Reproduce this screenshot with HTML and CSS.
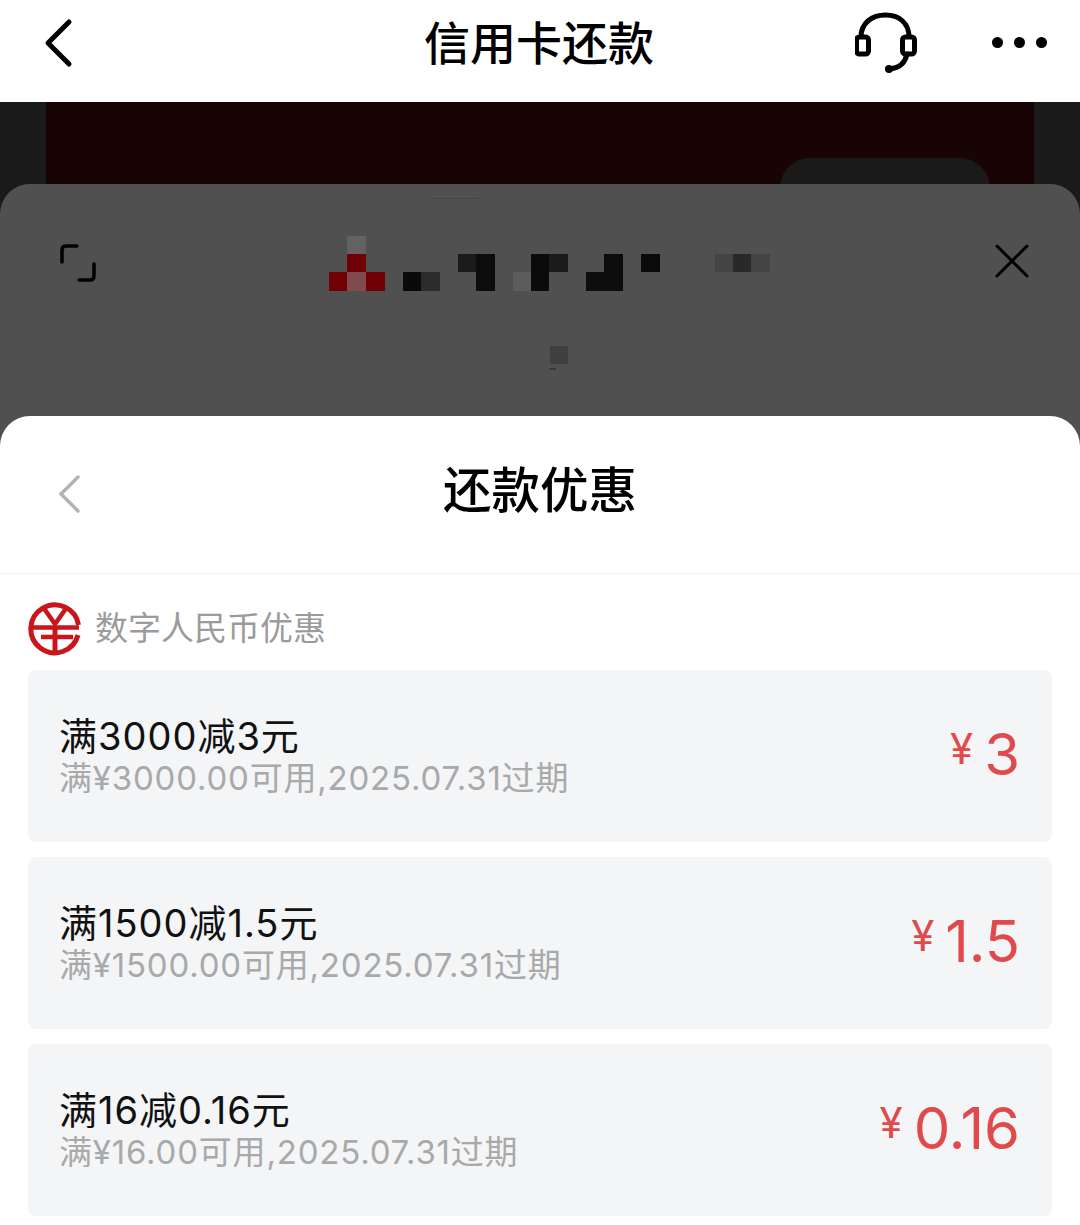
FILE: index.html
```html
<html>
    <head>
        <title>信用卡还款</title>
        <link rel="stylesheet" href="styles.css">
    </head>
    <body>
        <div class="page">
            <div class="nav">
                <svg class="nav-back" width="32" height="50" viewBox="0 0 32 50"><path d="M27 4 L6 25 L27 46" fill="none" stroke="#000" stroke-width="5" stroke-linecap="round" stroke-linejoin="round"/></svg>
                <div class="nav-title">信用卡还款</div>
                <svg class="nav-service" width="64" height="64" viewBox="0 0 64 64">
                    <path d="M6 27 C6 13 17 5 30.500 5 C44 5 54 13 54 27" fill="none" stroke="#000" stroke-width="5"/>
                    <rect x="1.500" y="27" width="12" height="17" rx="3" fill="#fff" stroke="#000" stroke-width="5"/>
                    <rect x="47.500" y="27" width="12" height="17" rx="3" fill="#fff" stroke="#000" stroke-width="5"/>
                    <path d="M52 44 C50 54 44 58 35 59" fill="none" stroke="#000" stroke-width="5" stroke-linecap="round"/>
                    <circle cx="34" cy="59" r="4"/>
                </svg>
                <div class="nav-more"><span></span><span></span><span></span></div>
            </div>

            <div class="backdrop">
                <div class="backdrop-panel"><div class="backdrop-pill"></div></div>
            </div>

            <div class="gray-sheet">
                <div class="handle"></div>
                <div class="gray-head">
                    <svg width="38" height="38" viewBox="0 0 38 38">
                        <path d="M17 2 H6 Q2 2 2 6 V18" fill="none" stroke="#000" stroke-width="3.500" stroke-linecap="round"/>
                        <path d="M34 20 V32 Q34 36 30 36 H19" fill="none" stroke="#000" stroke-width="3.500" stroke-linecap="round"/>
                    </svg>
                    <svg class="mosaic" width="441" height="137" viewBox="0 0 441 137">
                        <rect x="18" y="0" width="19" height="18" fill="#626262"/>
                        <rect x="18" y="18" width="19" height="18" fill="#700006"/>
                        <rect x="0" y="36" width="19" height="19" fill="#700006"/>
                        <rect x="18" y="36" width="19" height="19" fill="#7e4c4e"/>
                        <rect x="37" y="36" width="19" height="19" fill="#700006"/>
                        <rect x="74" y="36" width="18" height="19" fill="#0a0a0a"/>
                        <rect x="92" y="36" width="19" height="19" fill="#2b2b2b"/>
                        <rect x="129" y="18" width="18" height="18" fill="#1b1b1b"/>
                        <rect x="147" y="18" width="19" height="37" fill="#0c0c0c"/>
                        <rect x="184" y="36" width="18" height="19" fill="#5c5c5c"/>
                        <rect x="202" y="18" width="18" height="37" fill="#0b0b0b"/>
                        <rect x="220" y="18" width="19" height="18" fill="#1b1b1b"/>
                        <rect x="257" y="36" width="18" height="19" fill="#0d0d0d"/>
                        <rect x="275" y="18" width="19" height="37" fill="#0d0d0d"/>
                        <rect x="312" y="18" width="19" height="18" fill="#0b0b0b"/>
                        <rect x="386" y="18" width="18" height="18" fill="#444"/>
                        <rect x="404" y="18" width="18" height="18" fill="#292929"/>
                        <rect x="422" y="18" width="19" height="18" fill="#444"/>
                        <rect x="221" y="110" width="18" height="18" fill="#3f3f3f"/>
                        <rect x="220" y="132" width="7" height="2" fill="#3a3a3a"/>
                    </svg>
                    <svg width="34" height="34" viewBox="0 0 34 34"><path d="M2 2 L32 32 M32 2 L2 32" fill="none" stroke="#000" stroke-width="3" stroke-linecap="round"/></svg>
                </div>

                <div class="sheet">
                    <div class="sheet-head">
                        <svg class="sheet-back" width="24" height="40" viewBox="0 0 24 40"><path d="M21 3 L4 20 L21 37" fill="none" stroke="#b3b3b3" stroke-width="3.500" stroke-linecap="round" stroke-linejoin="round"/></svg>
                        <div class="sheet-title">还款优惠</div>
                    </div>
                    <div class="section">
                        <div class="section-head">
                            <svg class="rmb-logo" width="54" height="54" viewBox="0 0 54 54">
                                <path d="M50 33 A24 24 0 1 1 50.500 23" fill="none" stroke="#c9161c" stroke-width="5"/>
                                <path d="M15 5 L27 22 L39 5" fill="none" stroke="#c9161c" stroke-width="4.500"/>
                                <path d="M27 24 V51" stroke="#c9161c" stroke-width="5"/>
                                <path d="M5 25.500 H51 M13 35 H45" stroke="#c9161c" stroke-width="4.500"/>
                            </svg>
                            <span>数字人民币优惠</span>
                        </div>

                        <div class="card">
                            <div>
                                <div class="card-title">满3000减3元</div>
                                <div class="card-sub">满¥3000.00可用,2025.07.31过期</div>
                            </div>
                            <div class="card-price"><span class="yen">¥</span>3</div>
                        </div>
                        <div class="card">
                            <div>
                                <div class="card-title">满1500减1.5元</div>
                                <div class="card-sub">满¥1500.00可用,2025.07.31过期</div>
                            </div>
                            <div class="card-price"><span class="yen">¥</span>1.5</div>
                        </div>
                        <div class="card">
                            <div>
                                <div class="card-title">满16减0.16元</div>
                                <div class="card-sub">满¥16.00可用,2025.07.31过期</div>
                            </div>
                            <div class="card-price"><span class="yen">¥</span>0.16</div>
                        </div>
                    </div>
                </div>
            </div>
        </div>
    </body>
</html>
```

FILE: styles.css
```css
html, body {
    margin: 0;
    background: #fff;
}

.page {
    width: 1080px;
    height: 1225px;
    overflow: hidden;
    font-family: "Inter", "Noto Sans CJK SC", sans-serif;
}

.nav {
    height: 102px;
    display: flex;
    align-items: center;
    background: #fff;
    padding: 0 33px 0 42px;
    box-sizing: border-box;
}
.nav-back {
    margin-top: -16px;
}
.nav-title {
    flex: 1;
    text-align: center;
    font-size: 46px;
    font-weight: 500;
    color: #000;
    margin-top: -22px;
    padding-left: 149px;
    box-sizing: border-box;
}
.nav-service {
    margin-top: -18px;
    margin-right: 73px;
}
.nav-more {
    display: flex;
    gap: 11px;
    margin-top: -18px;
}
.nav-more span {
    width: 11px;
    height: 11px;
    border-radius: 50%;
    background: #000;
}

.backdrop {
    height: 112px;
    background: #1a1a1a;
    padding: 0 46px;
}
.backdrop-panel {
    height: 100%;
    background: #190405;
    display: flex;
    justify-content: flex-end;
    padding: 56px 44px 0 0;
    box-sizing: border-box;
}
.backdrop-pill {
    width: 210px;
    height: 56px;
    background: #1a1a1a;
    border-radius: 30px 30px 0 0;
}

.gray-sheet {
    margin-top: -30px;
    height: 1041px;
    background: #505050;
    border-radius: 30px 30px 0 0;
    position: relative;
}
.handle {
    position: absolute;
    left: 430px;
    top: 14px;
    width: 48px;
    height: 1px;
    background: #444;
}
.gray-head {
    height: 232px;
    display: flex;
    justify-content: space-between;
    align-items: flex-start;
    padding: 60px 51px 0 60px;
    box-sizing: border-box;
}
.mosaic {
    margin: -8px 0 0 6px;
}

.sheet {
    height: 809px;
    background: #fff;
    border-radius: 30px 30px 0 0;
}
.sheet-head {
    height: 158px;
    display: flex;
    align-items: center;
    border-bottom: 1px solid #f0f0f0;
    box-sizing: border-box;
    padding: 0 0 6px 57px;
}
.sheet-back {
    margin-top: 4px;
}
.sheet-title {
    flex: 1;
    text-align: center;
    font-size: 48.500px;
    font-weight: 500;
    color: #000;
    padding-right: 81px;
    margin-top: -10px;
}

.section {
    padding: 0 28px;
}
.section-head {
    height: 96px;
    display: flex;
    align-items: center;
    gap: 13px;
    padding-top: 8px;
    box-sizing: border-box;
    font-size: 33px;
    color: #9b9b9b;
}
.rmb-logo {
    margin-top: 6px;
}

.card {
    height: 172px;
    margin-bottom: 15px;
    background: #f3f5f7;
    border-radius: 8px;
    display: flex;
    justify-content: space-between;
    align-items: center;
    padding: 0 32px 0 31px;
    box-sizing: border-box;
}
.card-title {
    font-size: 38px;
    line-height: 44px;
    letter-spacing: 1px;
    color: #111;
}
.card-sub {
    font-size: 33px;
    line-height: 40px;
    letter-spacing: 0.800px;
    color: #a9a9a9;
}
.card-price {
    font-size: 58px;
    line-height: 70px;
    margin-top: -10px;
    color: #e04a4c;
}
.yen {
    font-size: 42px;
    vertical-align: 11px;
    margin-right: 11px;
}
```
